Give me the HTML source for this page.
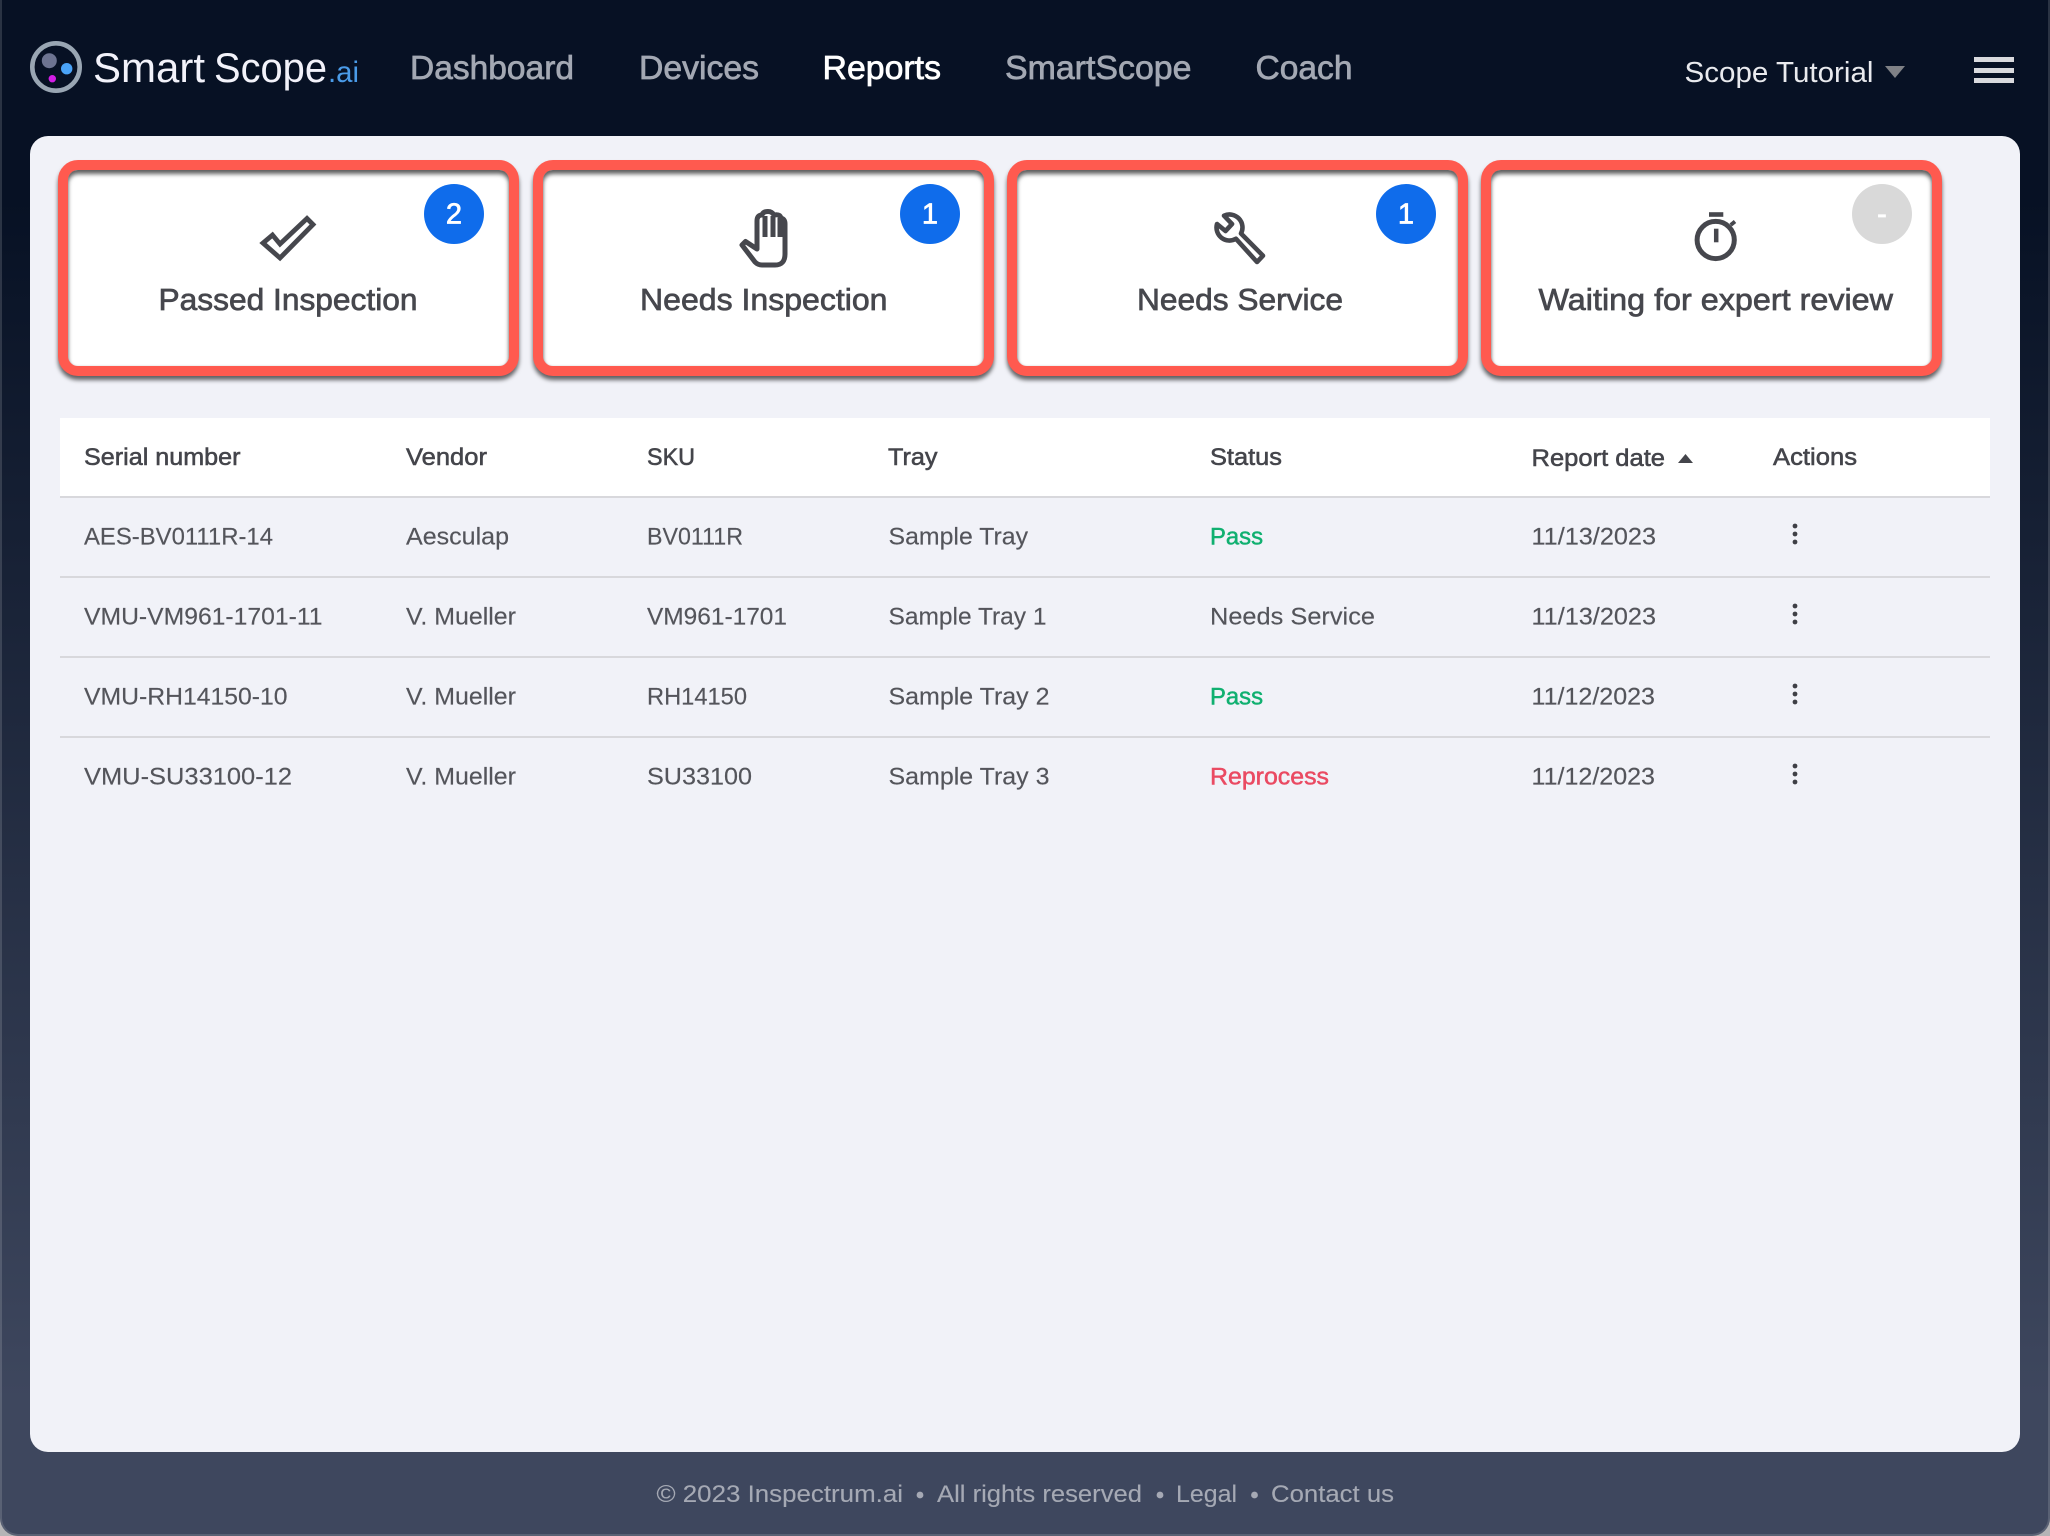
<!DOCTYPE html>
<html lang="en">
<head>
<meta charset="utf-8">
<title>SmartScope Reports</title>
<style>
html,body{margin:0;padding:0;width:2050px;height:1536px;overflow:hidden;background:#b4b4b6;}
#app{position:absolute;left:0;top:0;width:2050px;height:1536px;border-radius:0 0 18px 18px;overflow:hidden;
background:linear-gradient(180deg,#071124 0,#071124 200px,#3e475e 1400px,#3e475e 100%);}
#edge{position:absolute;left:0;top:0;width:2050px;height:1536px;border-radius:0 0 18px 18px;box-sizing:border-box;
border:2px solid rgba(255,255,255,.14);border-top:0;pointer-events:none;}
#panel{position:absolute;left:30px;top:136px;width:1990px;height:1316px;background:#f1f2f8;border-radius:18px;}
.card{position:absolute;top:160px;width:461px;height:216px;box-sizing:border-box;background:#fff;border:10px solid #ff5a4f;border-radius:20px;
box-shadow:0 4px 4px rgba(0,0,0,.6);}
.card i{position:absolute;left:0;top:0;right:0;bottom:0;border-radius:10px;box-shadow:inset 0 4px 4px rgba(0,0,0,.62),inset 0 0 2px rgba(0,0,0,.15);}
.badge{position:absolute;top:184px;width:60px;height:60px;border-radius:50%;background:#0f6ceb;}
#thead{position:absolute;left:60px;top:418px;width:1930px;height:78px;background:#fff;}
.ln{position:absolute;left:60px;width:1930px;height:2px;background:#d8d8dc;}
.bar{position:absolute;left:1974px;width:40px;height:5px;background:#d9dade;}
svg{position:absolute;left:0;top:0;}
text{font-family:"Liberation Sans",sans-serif;}
.nav{font-size:33.5px;fill:#a3a8b3;stroke:#a3a8b3;stroke-width:.7px;}
.lab{font-size:31px;fill:#46474d;stroke:#46474d;stroke-width:.7px;}
.th{font-size:24.5px;fill:#44454b;stroke:#44454b;stroke-width:.55px;}
.td{font-size:24.5px;fill:#54555b;stroke:#54555b;stroke-width:.15px;}
.ft{font-size:24.5px;fill:#a5a9b4;stroke:#a5a9b4;stroke-width:.12px;}
.bd{font-size:29px;fill:#fff;stroke:#fff;stroke-width:.7px;}
</style>
</head>
<body>
<div id="app">
  <div class="bar" style="top:57px"></div>
  <div class="bar" style="top:68px"></div>
  <div class="bar" style="top:78px"></div>
  <div id="panel"></div>
  <div class="card" style="left:58px"><i></i></div>
  <div class="card" style="left:532.5px"><i></i></div>
  <div class="card" style="left:1007px"><i></i></div>
  <div class="card" style="left:1481px"><i></i></div>
  <div class="badge" style="left:424px"></div>
  <div class="badge" style="left:900px"></div>
  <div class="badge" style="left:1376px"></div>
  <div class="badge" style="left:1852px;background:#d9d9d9"></div>
  <div id="thead"></div>
  <div class="ln" style="top:496px"></div>
  <div class="ln" style="top:576px"></div>
  <div class="ln" style="top:656px"></div>
  <div class="ln" style="top:736px"></div>

  <svg width="2050" height="1536" viewBox="0 0 2050 1536" xmlns="http://www.w3.org/2000/svg">
    <!-- logo -->
    <circle cx="56" cy="67" r="23.7" fill="none" stroke="#99a6b3" stroke-width="4.6"/>
    <circle cx="49.3" cy="60.7" r="7.5" fill="#6d7491"/>
    <circle cx="66.7" cy="68.7" r="5.7" fill="#4aa3f7"/>
    <circle cx="52.3" cy="78.7" r="3.7" fill="#d21ee6"/>
    <text x="93" y="82" font-size="42" fill="#f2f2fa" textLength="112" lengthAdjust="spacingAndGlyphs">Smart</text>
    <text x="214" y="82" font-size="42" fill="#f2f2fa" textLength="113" lengthAdjust="spacingAndGlyphs">Scope</text>
    <text x="328" y="82" font-size="30" fill="#4a9be8" textLength="31" lengthAdjust="spacingAndGlyphs">.ai</text>

    <!-- nav -->
    <text class="nav" x="410" y="79" textLength="164" lengthAdjust="spacingAndGlyphs">Dashboard</text>
    <text class="nav" x="639" y="79" textLength="120" lengthAdjust="spacingAndGlyphs">Devices</text>
    <text class="nav" x="822.5" y="79" textLength="118.5" lengthAdjust="spacingAndGlyphs" style="fill:#fff;stroke:#fff">Reports</text>
    <text class="nav" x="1005" y="79" textLength="186.5" lengthAdjust="spacingAndGlyphs">SmartScope</text>
    <text class="nav" x="1255.5" y="79" textLength="97" lengthAdjust="spacingAndGlyphs">Coach</text>
    <text x="1684.5" y="82" font-size="28.5" fill="#e9eaee" textLength="189" lengthAdjust="spacingAndGlyphs">Scope Tutorial</text>
    <path d="M1885 66H1905L1895 78Z" fill="#7f8186"/>

    <!-- card labels -->
    <text class="lab" x="158.5" y="310" textLength="259" lengthAdjust="spacingAndGlyphs">Passed Inspection</text>
    <text class="lab" x="640" y="310" textLength="247.5" lengthAdjust="spacingAndGlyphs">Needs Inspection</text>
    <text class="lab" x="1137" y="310" textLength="206" lengthAdjust="spacingAndGlyphs">Needs Service</text>
    <text class="lab" x="1538.5" y="310" textLength="354.5" lengthAdjust="spacingAndGlyphs">Waiting for expert review</text>

    <!-- badges -->
    <text class="bd" x="454" y="223.5" text-anchor="middle">2</text>
    <text class="bd" x="930" y="223.5" text-anchor="middle">1</text>
    <text class="bd" x="1406" y="223.5" text-anchor="middle">1</text>
    <text class="bd" x="1882" y="223.5" text-anchor="middle">-</text>

    <!-- check -->
    <path d="M280 258 L263 243 L272.5 235 L280 244 L307 218.5 L313 224.5 Z" fill="none" stroke="#46474d" stroke-width="4.8" stroke-linejoin="miter"/>
    <!-- hand -->
    <g fill="none" stroke="#46474d" stroke-width="5" stroke-linejoin="round">
      <path d="M742 245 L745.5 241.5 L757 249 V221 Q757 215 762 215 Q763 211.5 768 211.5 Q772 211.5 774 215 Q780 214 781 218 Q785 219 785 224 V254 Q785 265 775 265 H762 Q758 265 755 262 Z"/>
      <path d="M765 216V237M773 216V237M780 218V237"/>
    </g>
    <!-- wrench -->
    <path d="M1224 215.7 A13 13 0 0 1 1241 233.5 L1263 255.7 L1257 262 L1236 238.8 A13 13 0 0 1 1217 224 L1225.5 231 L1232 224 Z" fill="none" stroke="#46474d" stroke-width="4.6" stroke-linejoin="round"/>
    <!-- stopwatch -->
    <g fill="none" stroke="#46474d">
      <circle cx="1715.7" cy="240" r="18.6" stroke-width="5"/>
      <path d="M1709 214.5H1723.3" stroke-width="4.6"/>
      <path d="M1716.2 228.7V242.3" stroke-width="4.5"/>
      <path d="M1730.7 225L1735 221.5" stroke-width="3.8"/>
    </g>

    <!-- table header -->
    <text class="th" x="84" y="465" textLength="156.5" lengthAdjust="spacingAndGlyphs">Serial number</text>
    <text class="th" x="406" y="465" textLength="81" lengthAdjust="spacingAndGlyphs">Vendor</text>
    <text class="th" x="647" y="465" textLength="48" lengthAdjust="spacingAndGlyphs">SKU</text>
    <text class="th" x="888" y="465" textLength="49.5" lengthAdjust="spacingAndGlyphs">Tray</text>
    <text class="th" x="1210" y="465" textLength="72" lengthAdjust="spacingAndGlyphs">Status</text>
    <text class="th" x="1531.5" y="466" textLength="133.5" lengthAdjust="spacingAndGlyphs">Report date</text>
    <path d="M1678 463L1685.5 454L1693 463Z" fill="#44454b"/>
    <text class="th" x="1773" y="465" textLength="84" lengthAdjust="spacingAndGlyphs">Actions</text>

    <!-- row 1 -->
    <text class="td" x="84" y="544.6" textLength="189" lengthAdjust="spacingAndGlyphs">AES-BV0111R-14</text>
    <text class="td" x="406" y="544.6" textLength="103" lengthAdjust="spacingAndGlyphs">Aesculap</text>
    <text class="td" x="647" y="544.6" textLength="96" lengthAdjust="spacingAndGlyphs">BV0111R</text>
    <text class="td" x="888.5" y="544.6" textLength="139.5" lengthAdjust="spacingAndGlyphs">Sample Tray</text>
    <text class="td" x="1210" y="544.6" textLength="53" lengthAdjust="spacingAndGlyphs" style="fill:#10b070;stroke:#10b070;stroke-width:.5px">Pass</text>
    <text class="td" x="1531.5" y="544.6" textLength="124.5" lengthAdjust="spacingAndGlyphs">11/13/2023</text>
    <!-- row 2 -->
    <text class="td" x="84" y="624.6" textLength="238.5" lengthAdjust="spacingAndGlyphs">VMU-VM961-1701-11</text>
    <text class="td" x="406" y="624.6" textLength="110" lengthAdjust="spacingAndGlyphs">V. Mueller</text>
    <text class="td" x="647" y="624.6" textLength="140" lengthAdjust="spacingAndGlyphs">VM961-1701</text>
    <text class="td" x="888.5" y="624.6" textLength="158" lengthAdjust="spacingAndGlyphs">Sample Tray 1</text>
    <text class="td" x="1210" y="624.6" textLength="165" lengthAdjust="spacingAndGlyphs">Needs Service</text>
    <text class="td" x="1531.5" y="624.6" textLength="124.5" lengthAdjust="spacingAndGlyphs">11/13/2023</text>
    <!-- row 3 -->
    <text class="td" x="84" y="704.6" textLength="203.5" lengthAdjust="spacingAndGlyphs">VMU-RH14150-10</text>
    <text class="td" x="406" y="704.6" textLength="110" lengthAdjust="spacingAndGlyphs">V. Mueller</text>
    <text class="td" x="647" y="704.6" textLength="100" lengthAdjust="spacingAndGlyphs">RH14150</text>
    <text class="td" x="888.5" y="704.6" textLength="161" lengthAdjust="spacingAndGlyphs">Sample Tray 2</text>
    <text class="td" x="1210" y="704.6" textLength="53" lengthAdjust="spacingAndGlyphs" style="fill:#10b070;stroke:#10b070;stroke-width:.5px">Pass</text>
    <text class="td" x="1531.5" y="704.6" textLength="123.5" lengthAdjust="spacingAndGlyphs">11/12/2023</text>
    <!-- row 4 -->
    <text class="td" x="84" y="784.6" textLength="208" lengthAdjust="spacingAndGlyphs">VMU-SU33100-12</text>
    <text class="td" x="406" y="784.6" textLength="110" lengthAdjust="spacingAndGlyphs">V. Mueller</text>
    <text class="td" x="647" y="784.6" textLength="105" lengthAdjust="spacingAndGlyphs">SU33100</text>
    <text class="td" x="888.5" y="784.6" textLength="161" lengthAdjust="spacingAndGlyphs">Sample Tray 3</text>
    <text class="td" x="1210" y="784.6" textLength="119" lengthAdjust="spacingAndGlyphs" style="fill:#ea4a62;stroke:#ea4a62;stroke-width:.5px">Reprocess</text>
    <text class="td" x="1531.5" y="784.6" textLength="123.5" lengthAdjust="spacingAndGlyphs">11/12/2023</text>

    <!-- kebabs -->
    <g fill="#3f4046">
      <circle cx="1795" cy="526" r="2.4"/><circle cx="1795" cy="534" r="2.4"/><circle cx="1795" cy="542" r="2.4"/>
      <circle cx="1795" cy="606" r="2.4"/><circle cx="1795" cy="614" r="2.4"/><circle cx="1795" cy="622" r="2.4"/>
      <circle cx="1795" cy="686" r="2.4"/><circle cx="1795" cy="694" r="2.4"/><circle cx="1795" cy="702" r="2.4"/>
      <circle cx="1795" cy="766" r="2.4"/><circle cx="1795" cy="774" r="2.4"/><circle cx="1795" cy="782" r="2.4"/>
    </g>

    <!-- footer -->
    <text class="ft" x="656.5" y="1502" textLength="246.5" lengthAdjust="spacingAndGlyphs">© 2023 Inspectrum.ai</text>
    <circle cx="920" cy="1495" r="3.4" fill="#a5a9b4"/>
    <text class="ft" x="937" y="1502" textLength="205" lengthAdjust="spacingAndGlyphs">All rights reserved</text>
    <circle cx="1160" cy="1495" r="3.4" fill="#a5a9b4"/>
    <text class="ft" x="1176" y="1502" textLength="61" lengthAdjust="spacingAndGlyphs">Legal</text>
    <circle cx="1254.5" cy="1495" r="3.4" fill="#a5a9b4"/>
    <text class="ft" x="1271" y="1502" textLength="123" lengthAdjust="spacingAndGlyphs">Contact us</text>
  </svg>
  <div id="edge"></div>
</div>
</body>
</html>
